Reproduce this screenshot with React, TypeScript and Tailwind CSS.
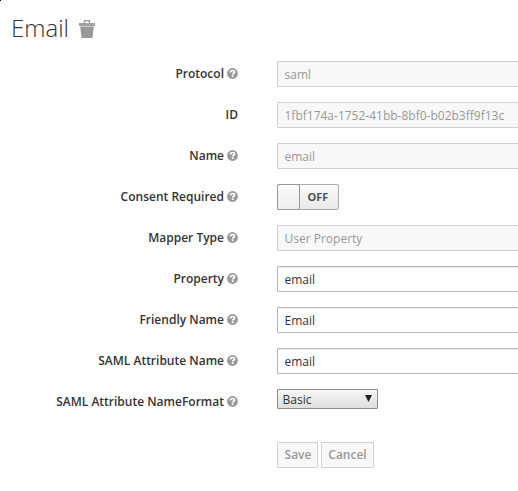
import React from 'react';

function HelpIcon() {
  return (
    <svg viewBox="0 0 11 11" className="ml-[3px] h-[11px] w-[11px] shrink-0">
      <circle cx="5.5" cy="5.5" r="5.4" fill="#999" />
      <path d="M3.4 4.4C3.5 3 4.4 2.5 5.5 2.5c1.2 0 2 .6 2 1.5 0 1.2-1.8 1.2-1.8 2.6" fill="none" stroke="#fff" strokeWidth="1.7" />
      <rect x="4.8" y="7.3" width="1.8" height="1.7" fill="#fff" />
    </svg>
  );
}

function TrashIcon() {
  return (
    <svg viewBox="0 0 16 18" className="ml-[10px] mt-px h-[18px] w-4">
      <path d="M5.5 3V.7h5V3" fill="none" stroke="#999" strokeWidth="1.3" />
      <rect x="0" y="3" width="16" height="3" fill="#a3a3a3" />
      <rect x="1" y="6" width="14" height="1" fill="#ccc" />
      <path d="M1.3 7h13.4l-1.2 11h-11z" fill="#999" />
    </svg>
  );
}

function Row({ label, help = true, children }: { label: string; help?: boolean; children: React.ReactNode }) {
  return (
    <div className="flex h-[26px] items-start">
      <label className="flex h-[25px] w-[238px] shrink-0 items-center justify-end whitespace-nowrap font-semibold">
        <span>{label}</span>
        {help && <HelpIcon />}
      </label>
      <div className="ml-[39px] min-w-0 grow">{children}</div>
    </div>
  );
}

function Field({ value, disabled = false }: { value: string; disabled?: boolean }) {
  return (
    <input
      defaultValue={value}
      disabled={disabled}
      className={
        'block h-[26px] w-[300px] rounded-[1px] border px-[6.5px] pt-px text-[12px] outline-none ' +
        (disabled
          ? 'border-[#d0d0d0] bg-[#f8f8f8] text-[#999]'
          : 'border-[#b6b6b6] bg-white text-[#333] shadow-[inset_0_1px_1px_rgba(0,0,0,0.075)]')
      }
    />
  );
}

export default function App() {
  return (
    <main className="relative h-[491px] w-[518px] overflow-hidden bg-white font-['Open_Sans','Noto_Sans',sans-serif] text-[12px] leading-[17px] text-[#333]">
      <span className="absolute left-0 top-0 h-px w-px bg-black" />
      <header className="flex h-[61px] items-start pl-[11px] pt-[12px]">
        <h1 className="flex items-center text-[24px] font-light leading-[32px]">
          Email
          <TrashIcon />
        </h1>
      </header>
      <form className="flex flex-col gap-[15px]">
        <Row label="Protocol"><Field value="saml" disabled /></Row>
        <Row label="ID" help={false}><Field value="1fbf174a-1752-41bb-8bf0-b02b3ff9f13c" disabled /></Row>
        <Row label="Name"><Field value="email" disabled /></Row>
        <Row label="Consent Required">
          <div className="flex h-[26px] w-[62px] rounded-[2px] border border-[#aaa] bg-linear-to-b from-[#fafafa] to-[#e9e9e9]">
            <span className="-my-px -ml-px w-[23px] rounded-[2px] border border-[#999] bg-linear-to-b from-[#fafafa] to-[#ededed]" />
            <span className="flex grow items-center justify-center pb-[2px] pr-[2px] text-[11px] font-bold text-[#4d5258]">OFF</span>
          </div>
        </Row>
        <Row label="Mapper Type"><Field value="User Property" disabled /></Row>
        <Row label="Property"><Field value="email" /></Row>
        <Row label="Friendly Name"><Field value="Email" /></Row>
        <Row label="SAML Attribute Name"><Field value="email" /></Row>
        <Row label="SAML Attribute NameFormat">
          <button type="button" className="flex h-[20px] w-[101px] items-center justify-between rounded-[1px] border border-[#8c8c8c] bg-linear-to-b from-[#f6f6f6] to-[#dedede] pl-[4.5px] pr-[5px]">
            <span>Basic</span>
            <svg viewBox="0 0 7 7" className="mb-px h-[7px] w-[7px]"><path d="M0 0h7L3.5 7z" fill="#222" /></svg>
          </button>
        </Row>
      </form>
      <div className="ml-[277px] mt-[27px] flex gap-[3px] font-semibold text-[#999]">
        <button className="h-[26px] w-[41px] rounded-[1px] border border-[#d0d0d0] bg-[#f8f8f8] pb-[2px] pl-px">Save</button>
        <button className="h-[26px] w-[53px] rounded-[1px] border border-[#d0d0d0] bg-[#f8f8f8] pb-[2px]">Cancel</button>
      </div>
    </main>
  );
}
